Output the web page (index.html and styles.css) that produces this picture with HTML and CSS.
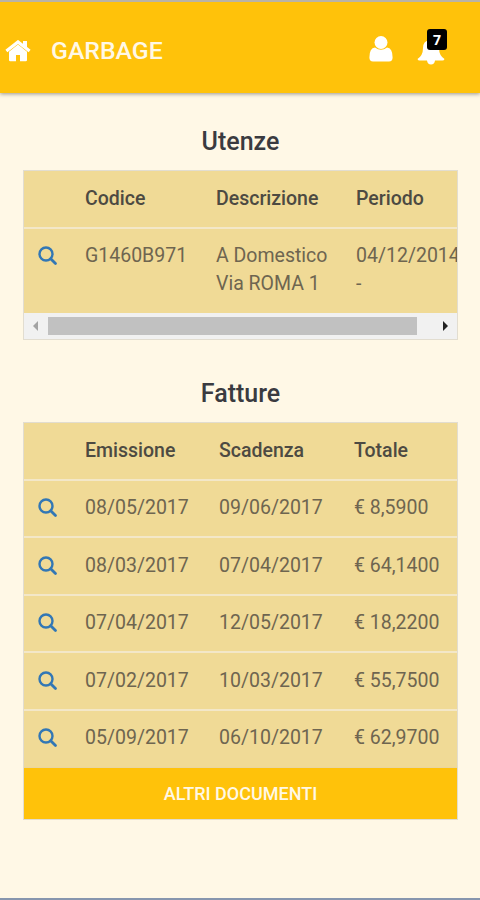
FILE: index.html
```html
<!DOCTYPE html>
<html lang="it">
<head>
    <meta charset="UTF-8">
    <meta name="viewport" content="width=device-width, initial-scale=1.0">
    <title>Garbage</title>
    <link rel="stylesheet" href="styles.css">
</head>
<body>
    <svg class="icon-defs">
        <symbol id="icon-search" viewBox="0 0 20 20">
            <circle cx="8" cy="8" r="6.5" fill="none" stroke="currentColor" stroke-width="2.4"/>
            <path d="M12.700 12.700L17.500 17.500" fill="none" stroke="currentColor" stroke-width="2.8" stroke-linecap="round"/>
        </symbol>
    </svg>

    <header class="navbar">
        <a class="home" href="#">
            <svg width="26" height="22" viewBox="0 0 26 22">
                <path d="M13 4.500L4 11.800V20q0 1.300 1.300 1.300H11V15h4v6.300h5.700Q22 21.300 22 20v-8.200z" fill="#fff"/>
                <path d="M1.400 11L13 1.900 24.600 11" fill="none" stroke="#fff" stroke-width="3.200"/>
                <path d="M18 1h4v8l-4-3z" fill="#fff"/>
            </svg>
        </a>
        <span class="brand">GARBAGE</span>
        <a class="user" href="#">
            <svg width="24" height="26" viewBox="0 0 24 26">
                <circle cx="12" cy="6.500" r="6.500" fill="#fff"/>
                <path d="M6 11.500q6 4.600 12 0Q23.600 12 23.600 21.500q0 4-3.600 4H4q-3.600 0-3.600-4Q.4 12 6 11.500z" fill="#fff"/>
            </svg>
        </a>
        <a class="alerts" href="#">
            <svg width="28" height="28" viewBox="0 0 28 28">
                <path d="M14 1q1.500 0 1.500 2Q22 4 22 11q0 7.500 5.500 11-.5 1.500-2 1.500H18q-.5 4-4 4t-4-4H2.500q-1.500 0-2-1.500Q6 18.500 6 11q0-7 6.500-8 0-2 1.500-2z" fill="#fff"/>
            </svg>
            <span class="badge">7</span>
        </a>
    </header>

    <main class="content">
        <h2>Utenze</h2>
        <div class="panel">
            <div class="table utenze">
                <div class="row head">
                    <span></span><span>Codice</span><span>Descrizione</span><span>Periodo</span>
                </div>
                <div class="row">
                    <a href="#"><svg class="search"><use href="#icon-search"/></svg></a>
                    <span>G1460B971</span><span>A Domestico<br>Via ROMA 1</span><span>04/12/2014<br>-</span>
                </div>
            </div>
            <div class="scrollbar">
                <span class="arrow left"></span>
                <span class="thumb"></span>
                <span class="arrow right"></span>
            </div>
        </div>

        <h2>Fatture</h2>
        <div class="panel">
            <div class="table fatture">
                <div class="row head">
                    <span></span><span>Emissione</span><span>Scadenza</span><span>Totale</span>
                </div>
                <div class="row">
                    <a href="#"><svg class="search"><use href="#icon-search"/></svg></a>
                    <span>08/05/2017</span><span>09/06/2017</span><span>€ 8,5900</span>
                </div>
                <div class="row">
                    <a href="#"><svg class="search"><use href="#icon-search"/></svg></a>
                    <span>08/03/2017</span><span>07/04/2017</span><span>€ 64,1400</span>
                </div>
                <div class="row">
                    <a href="#"><svg class="search"><use href="#icon-search"/></svg></a>
                    <span>07/04/2017</span><span>12/05/2017</span><span>€ 18,2200</span>
                </div>
                <div class="row">
                    <a href="#"><svg class="search"><use href="#icon-search"/></svg></a>
                    <span>07/02/2017</span><span>10/03/2017</span><span>€ 55,7500</span>
                </div>
                <div class="row">
                    <a href="#"><svg class="search"><use href="#icon-search"/></svg></a>
                    <span>05/09/2017</span><span>06/10/2017</span><span>€ 62,9700</span>
                </div>
            </div>
            <button class="more">ALTRI DOCUMENTI</button>
        </div>
    </main>
</body>
</html>
```
FILE: styles.css
```css
* {
    box-sizing: border-box;
}
body {
    margin: 0;
    height: 900px;
    overflow: hidden;
    background-color: #fff8e6;
    border-top: 2px solid #b9b3a6;
    border-bottom: 2px solid #8796ae;
    font-family: Roboto, sans-serif;
    font-size: 19.5px;
    line-height: 28px;
    color: #6e6550;
}
.icon-defs {
    display: none;
}
.navbar {
    display: flex;
    height: 91px;
    padding: 6px 35px 0 5px;
    align-items: center;
    background-color: #ffc20a;
    box-shadow: 0 1px 4px rgba(0,0,0,0.4);
    color: #fff8e6;
}
.navbar svg {
    display: block;
}
.brand {
    margin-left: 20px;
    font-size: 24.8px;
    font-weight: 500;
}
.user {
    margin: -3px 0 0 auto;
}
.alerts {
    position: relative;
    margin-left: 24px;
}
.badge {
    position: absolute;
    top: -8px;
    left: 10px;
    width: 20px;
    height: 21px;
    border-radius: 3px;
    background-color: #000;
    color: #fff;
    font: bold 14px/21px "Open Sans", sans-serif;
    text-align: center;
}
.content {
    padding: 35px 22px 0 23px;
}
h2 {
    margin: 0 0 14px;
    font-size: 25px;
    font-weight: 500;
    line-height: 28px;
    text-align: center;
    color: #3a3b40;
}
.panel {
    margin-bottom: 40px;
    border: 1px solid #e2ddd0;
    overflow: hidden;
}
.row {
    display: grid;
    min-height: 57.5px;
    padding: 13.5px 0 14px 14px;
    border-bottom: 2px solid #f3e7c8;
    background-color: #f0da96;
    white-space: nowrap;
}
.utenze .row {
    grid-template-columns: 47px 131px 140px 120px;
}
.utenze .row:last-child {
    min-height: 84.5px;
}
.fatture .row {
    grid-template-columns: 47px 134px 135px 100px;
}
.row:last-child {
    min-height: 56.5px;
    border-bottom: 0;
}
.head {
    font-weight: 500;
    color: #4d4a42;
}
.search {
    display: block;
    width: 20px;
    height: 20px;
    margin-top: 4px;
    color: #3277b5;
}
.scrollbar {
    display: flex;
    height: 26px;
    align-items: center;
    justify-content: space-between;
    padding: 0 9px;
    background-color: #f1f1f1;
}
.thumb {
    width: 369px;
    height: 18px;
    margin-right: 16px;
    background-color: #c1c1c1;
}
.arrow {
    border: 5px solid transparent;
}
.left {
    border-left: 0;
    border-right-color: #a3a3a3;
}
.right {
    border-right: 0;
    border-left-color: #222;
}
.more {
    display: block;
    width: 100%;
    height: 52px;
    border: 0;
    border-top: 1px solid #e9d5a0;
    background-color: #ffc20a;
    color: #fff8e6;
    font: 500 18px Roboto, sans-serif;
}
```
